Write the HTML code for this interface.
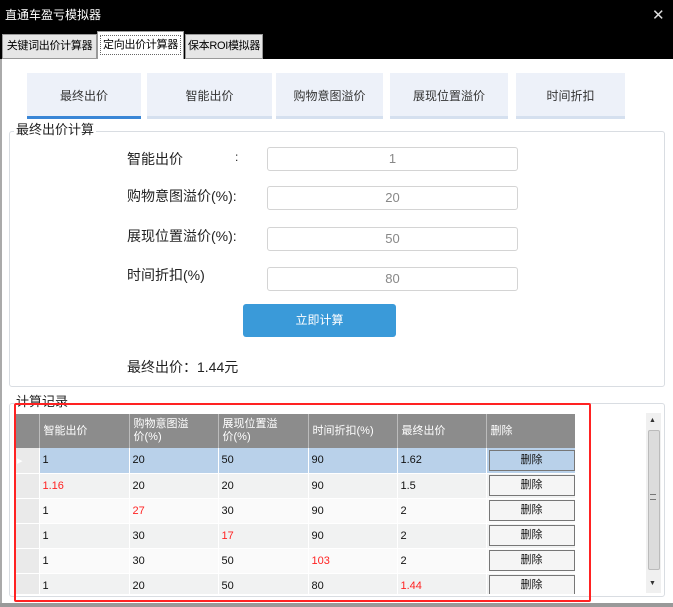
<!DOCTYPE html>
<html><head><meta charset="utf-8"><style>
*{margin:0;padding:0;box-sizing:border-box}
body{width:673px;height:607px;overflow:hidden;background:#fff;font-family:"Liberation Sans","Noto Sans CJK SC",sans-serif;position:relative;color:#222}
.a{position:absolute}
.hdr{left:0;top:0;width:673px;height:59px;background:#000}
.tab{top:34px;height:25px;background:#e6e6e6;border:1px solid #999;font-size:11px;line-height:23px;text-align:center;color:#000;white-space:nowrap;overflow:hidden;letter-spacing:-0.3px}
.st{top:73px;height:46px;background:#edf1f9;border-bottom:3px solid #d5e0ef;font-size:12px;line-height:46px;text-align:center;color:#333}
.fs{border:1px solid #d9dde2;border-radius:3px}
.lg{background:#fff;font-size:13px;padding:0 2px;color:#222;line-height:14px}
.lb{left:127px;font-size:14px;color:#222;white-space:nowrap}
.in{left:267px;width:251px;height:24px;border:1px solid #d4d4d4;border-radius:3px;font-size:13px;color:#888;text-align:center;line-height:22px}
table{border-collapse:collapse;font-size:11px;table-layout:fixed}
td{height:25px;padding-left:3px;border-right:1px solid #fff;border-bottom:1px solid #fff;color:#111}
th{background:#8c8c8c;color:#fff;font-weight:normal;text-align:left;padding-left:4px;height:34px;border-right:1px solid #bbb;font-size:11px;line-height:13px}
.r{color:#f22}
.b{display:block;width:86px;height:21px;border:1px solid #777;background:#f5f5f5;text-align:center;line-height:19px;font-size:11px;margin-left:-1px}
</style></head><body>
<div class="a hdr"></div>
<div class="a" style="left:5px;top:6px;color:#fff;font-size:12px">直通车盈亏模拟器</div>
<div class="a" style="left:652px;top:6px;color:#ddd;font-size:15px">✕</div>
<div class="a tab" style="left:2px;width:95px">关键词出价计算器</div>
<div class="a tab" style="left:97px;top:31px;height:28px;width:87px;background:#fff;border-bottom:none"><div style="margin:3px 2px;border:1px dotted #666;line-height:18px">定向出价计算器</div></div>
<div class="a tab" style="left:185px;width:78px">保本ROI模拟器</div>
<div class="a" style="left:0;top:59px;width:2px;height:548px;background:#aaa"></div>
<div class="a" style="left:0;top:603px;width:673px;height:4px;background:#999"></div>

<div class="a st" style="left:27px;width:114px;border-bottom-color:#3a86d6">最终出价</div>
<div class="a st" style="left:147px;width:125px">智能出价</div>
<div class="a st" style="left:276px;width:107px">购物意图溢价</div>
<div class="a st" style="left:390px;width:118px">展现位置溢价</div>
<div class="a st" style="left:516px;width:109px">时间折扣</div>

<div class="a fs" style="left:9px;top:131px;width:656px;height:256px"></div>
<div class="a lg" style="left:14px;top:123px">最终出价计算</div>
<div class="a lb" style="top:149px">智能出价</div><div class="a" style="left:235px;top:150px;font-size:12px">:</div>
<div class="a lb" style="top:186px">购物意图溢价(%):</div>
<div class="a lb" style="top:226px">展现位置溢价(%):</div>
<div class="a lb" style="top:265px">时间折扣(%)</div>
<div class="a in" style="top:147px">1</div>
<div class="a in" style="top:186px">20</div>
<div class="a in" style="top:227px">50</div>
<div class="a in" style="top:267px">80</div>
<div class="a" style="left:243px;top:304px;width:153px;height:33px;background:#3a9ad9;border-radius:3px;color:#fff;font-size:12px;text-align:center;line-height:33px">立即计算</div>
<div class="a lb" style="top:357px">最终出价：1.44元</div>

<div class="a fs" style="left:9px;top:403px;width:656px;height:194px"></div>
<div class="a lg" style="left:14px;top:395px">计算记录</div>
<div class="a" style="left:14px;top:414px;width:561px;height:180px;overflow:hidden">
<table style="width:561px">
<colgroup><col style="width:25px"><col style="width:90px"><col style="width:89px"><col style="width:90px"><col style="width:89px"><col style="width:89px"><col style="width:89px"></colgroup>
<tr><th style="background:#8c8c8c"></th><th>智能出价</th><th>购物意图溢<br>价(%)</th><th>展现位置溢<br>价(%)</th><th>时间折扣(%)</th><th>最终出价</th><th>删除</th></tr>
<tr style="background:#b9d1ea"><td style="background:#eaeaea;color:#fff">▸</td><td>1</td><td>20</td><td>50</td><td>90</td><td>1.62</td><td><span class="b" style="background:#b9d1ea">删除</span></td></tr>
<tr style="background:#f1f2f2"><td style="background:#eaeaea"></td><td class="r">1.16</td><td>20</td><td>20</td><td>90</td><td>1.5</td><td><span class="b">删除</span></td></tr>
<tr style="background:#fafafa"><td style="background:#eaeaea"></td><td>1</td><td class="r">27</td><td>30</td><td>90</td><td>2</td><td><span class="b">删除</span></td></tr>
<tr style="background:#f1f2f2"><td style="background:#eaeaea"></td><td>1</td><td>30</td><td class="r">17</td><td>90</td><td>2</td><td><span class="b">删除</span></td></tr>
<tr style="background:#fafafa"><td style="background:#eaeaea"></td><td>1</td><td>30</td><td>50</td><td class="r">103</td><td>2</td><td><span class="b">删除</span></td></tr>
<tr style="background:#f1f2f2"><td style="background:#eaeaea"></td><td>1</td><td>20</td><td>50</td><td>80</td><td class="r">1.44</td><td><span class="b">删除</span></td></tr>
</table></div>
<div class="a" style="left:14px;top:403px;width:577px;height:199px;border:2px solid #f22;border-radius:2px"></div>
<div class="a" style="left:646px;top:413px;width:15px;height:180px;background:#f0f0f0"></div>
<div class="a" style="left:648px;top:430px;width:12px;height:140px;background:#dcdcdc;border:1px solid #bbb;border-radius:2px"></div>
<div class="a" style="left:649px;top:417px;font-size:7px;color:#333">▲</div>
<div class="a" style="left:649px;top:580px;font-size:7px;color:#333">▼</div>
<div class="a" style="left:650px;top:494px;width:6px;height:6px;border-top:1px solid #777;border-bottom:1px solid #777"></div>
</body></html>
